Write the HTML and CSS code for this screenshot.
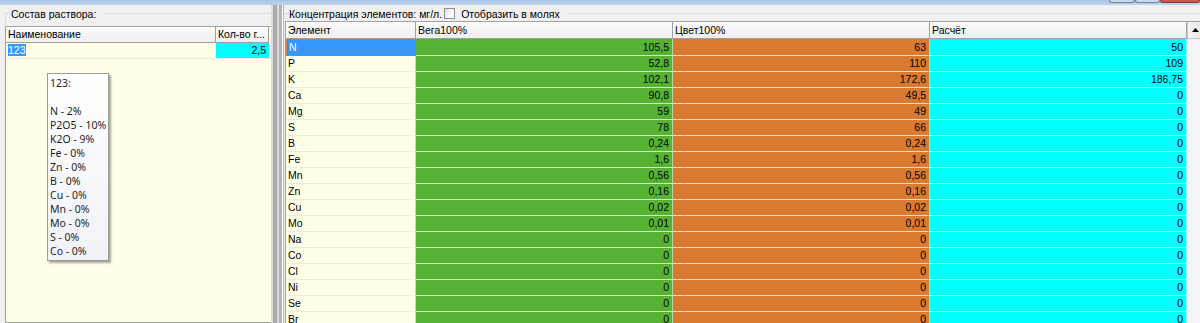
FILE: index.html
```html
<!DOCTYPE html>
<html lang="ru">
<head>
    <meta charset="UTF-8">
    <title>Состав раствора</title>
    <link rel="stylesheet" href="styles.css">
</head>
<body>
    <div class="titlebar">
        <span class="caption-btn min"></span>
        <span class="caption-btn max"></span>
        <span class="caption-btn close"></span>
    </div>

    <div class="workspace">
        <section class="left-panel">
            <div class="group-head">
                <span class="rule-start"></span>
                <span class="legend">Состав раствора:</span>
                <span class="rule"></span>
            </div>
            <div class="grid-box mix-grid">
                <table class="grid mix-table">
                    <colgroup><col class="c-name"><col class="c-qty"></colgroup>
                    <tr>
                        <th>Наименование</th>
                        <th>Кол-во г...</th>
                    </tr>
                    <tr>
                        <td class="name"><span class="sel-text">123</span></td>
                        <td class="qty">2,5</td>
                    </tr>
                </table>

                <div class="tooltip">
                    <div>123:</div>
                    <div>&nbsp;</div>
                    <div>N - 2%</div>
                    <div>P2O5 - 10%</div>
                    <div>K2O - 9%</div>
                    <div>Fe - 0%</div>
                    <div>Zn - 0%</div>
                    <div>B - 0%</div>
                    <div>Cu - 0%</div>
                    <div>Mn - 0%</div>
                    <div>Mo - 0%</div>
                    <div>S - 0%</div>
                    <div>Co - 0%</div>
                </div>
            </div>
        </section>

        <div class="splitter"></div>

        <section class="right-panel">
            <div class="group-head">
                <span class="rule-start"></span>
                <span class="legend">Концентрация элементов: мг/л.</span>
                <span class="checkbox"></span>
                <span class="legend">Отобразить в молях</span>
                <span class="rule"></span>
            </div>
            <div class="grid-box conc-grid">
                <table class="grid conc-table">
                    <colgroup>
                        <col class="c-el"><col class="c-val"><col class="c-val"><col class="c-val">
                    </colgroup>
                    <tr>
                        <th>Элемент</th>
                        <th>Вега100%</th>
                        <th>Цвет100%</th>
                        <th>Расчёт</th>
                    </tr>
                    <tr><td class="el current">N</td><td class="vega">105,5</td><td class="cvet">63</td><td class="calc">50</td></tr>
                    <tr><td class="el">P</td><td class="vega">52,8</td><td class="cvet">110</td><td class="calc">109</td></tr>
                    <tr><td class="el">K</td><td class="vega">102,1</td><td class="cvet">172,6</td><td class="calc">186,75</td></tr>
                    <tr><td class="el">Ca</td><td class="vega">90,8</td><td class="cvet">49,5</td><td class="calc">0</td></tr>
                    <tr><td class="el">Mg</td><td class="vega">59</td><td class="cvet">49</td><td class="calc">0</td></tr>
                    <tr><td class="el">S</td><td class="vega">78</td><td class="cvet">66</td><td class="calc">0</td></tr>
                    <tr><td class="el">B</td><td class="vega">0,24</td><td class="cvet">0,24</td><td class="calc">0</td></tr>
                    <tr><td class="el">Fe</td><td class="vega">1,6</td><td class="cvet">1,6</td><td class="calc">0</td></tr>
                    <tr><td class="el">Mn</td><td class="vega">0,56</td><td class="cvet">0,56</td><td class="calc">0</td></tr>
                    <tr><td class="el">Zn</td><td class="vega">0,16</td><td class="cvet">0,16</td><td class="calc">0</td></tr>
                    <tr><td class="el">Cu</td><td class="vega">0,02</td><td class="cvet">0,02</td><td class="calc">0</td></tr>
                    <tr><td class="el">Mo</td><td class="vega">0,01</td><td class="cvet">0,01</td><td class="calc">0</td></tr>
                    <tr><td class="el">Na</td><td class="vega">0</td><td class="cvet">0</td><td class="calc">0</td></tr>
                    <tr><td class="el">Co</td><td class="vega">0</td><td class="cvet">0</td><td class="calc">0</td></tr>
                    <tr><td class="el">Cl</td><td class="vega">0</td><td class="cvet">0</td><td class="calc">0</td></tr>
                    <tr><td class="el">Ni</td><td class="vega">0</td><td class="cvet">0</td><td class="calc">0</td></tr>
                    <tr><td class="el">Se</td><td class="vega">0</td><td class="cvet">0</td><td class="calc">0</td></tr>
                    <tr><td class="el">Br</td><td class="vega">0</td><td class="cvet">0</td><td class="calc">0</td></tr>
                </table>
                <div class="vscroll">
                    <div class="scroll-up">
                        <svg width="7" height="4" viewBox="0 0 7 4"><path d="M3.5 0 L7 4 L0 4 Z" fill="#000"/></svg>
                    </div>
                    <div class="scroll-track"></div>
                </div>
            </div>
        </section>
    </div>
</body>
</html>
```

FILE: styles.css
```css
body {
    margin: 0;
    height: 323px;
    overflow: hidden;
    background: #f0f0f0;
    font-family: "Liberation Sans", Arial, sans-serif;
    font-size: 10.5px;
    color: #000;
}

/* window caption strip */
.titlebar {
    height: 5px;
    background: linear-gradient(#a8c5e6, #bdd4ec);
    display: flex;
    justify-content: flex-end;
    align-items: flex-start;
}

.caption-btn {
    height: 3px;
    box-sizing: border-box;
    border: 1px solid #6f8399;
    border-top: none;
    border-radius: 0 0 3px 3px;
    background: #c9d9eb;
}

.caption-btn.min { width: 26px; }
.caption-btn.max { width: 25px; }

.caption-btn.close {
    width: 40px;
    background: #c8584e;
    border-color: #8d3a33;
}

.workspace {
    display: flex;
    height: 318px;
}

/* group box heading */
.group-head {
    display: flex;
    align-items: flex-start;
    flex: none;
}

.group-head .rule-start {
    width: 4px;
    margin-top: 8px;
    border-top: 1px solid #d5dfe5;
}

.group-head .rule {
    flex: 1;
    margin-top: 8px;
    margin-left: 8px;
    border-top: 1px solid #d5dfe5;
}

.legend {
    line-height: 16px;
    margin-top: 1px;
    padding: 0 1px;
    white-space: nowrap;
}

.left-panel {
    width: 271px;
    padding-left: 5px;
    box-sizing: border-box;
    display: flex;
    flex-direction: column;
}

.left-panel .group-head {
    height: 21px;
}

.left-panel .rule-start {
    height: 13px;
    border-left: 1px solid #d5dfe5;
}

.right-panel {
    flex: 1;
    min-width: 0;
    display: flex;
    flex-direction: column;
    border-left: 1px solid #b9b9b9;
}

.right-panel .group-head {
    height: 16px;
}

.checkbox {
    width: 11px;
    height: 11px;
    box-sizing: border-box;
    margin: 3px 5px 0 1px;
    border: 1px solid #8e8f8f;
    background: linear-gradient(135deg, #dcdcdc, #ffffff 70%);
}

.splitter {
    width: 12px;
    background: linear-gradient(90deg,
        #dcdcdc 0, #dcdcdc 2px,
        #aaaaaa 2px, #aaaaaa 6px,
        #dadada 6px, #dadada 8px,
        #b5b5b5 8px, #b5b5b5 11px,
        #ffffff 11px);
}

/* grids */
.grid-box {
    flex: 1;
    border: 1px solid #a0a0a0;
    border-right: none;
    background: #ffffe7;
}

.grid {
    border-collapse: separate;
    border-spacing: 0;
    table-layout: fixed;
}

.grid th,
.grid td {
    box-sizing: border-box;
    padding: 0 3px 0 2px;
    white-space: nowrap;
    overflow: hidden;
    font-weight: normal;
    text-align: left;
}

.grid th {
    background: linear-gradient(#fafafa, #efefef);
    border-right: 1px solid #a0a0a0;
    border-bottom: 1px solid #a0a0a0;
    box-shadow: inset 1px 1px #ffffff;
}

.mix-grid {
    position: relative;
}

.mix-table { width: 263px; }
.mix-table .c-name { width: 210px; }
.mix-table .c-qty { width: 53px; }

.mix-table th {
    height: 16px;
    line-height: 15px;
}

.mix-table td {
    height: 16px;
    line-height: 15px;
    border-bottom: 1px solid #ececdc;
}

.mix-table .sel-text {
    background: #3399ff;
    color: #fff;
}

.mix-table .qty {
    background: #00ffff;
    text-align: right;
}

.tooltip {
    position: absolute;
    left: 41px;
    top: 46px;
    width: 62px;
    box-sizing: border-box;
    padding: 2px 0 2px 2px;
    border: 1px solid #9a9a9a;
    background: linear-gradient(#ffffff, #f1f2f7);
    box-shadow: 2px 2px 2px rgba(0, 0, 0, 0.35);
    font-family: "Noto Sans", "Liberation Sans", sans-serif;
    font-size: 10.5px;
    line-height: 14px;
    color: #1e1e1e;
    white-space: nowrap;
}

.conc-grid {
    margin-left: 1px;
    display: flex;
    align-items: flex-start;
}

.conc-table {
    width: 901px;
    flex: none;
}

.conc-table .c-el { width: 130px; }
.conc-table .c-val { width: 257px; }

.conc-table th {
    height: 17px;
    line-height: 16px;
}

.conc-table td {
    height: 16px;
    line-height: 15px;
    border-right: 1px solid rgba(255, 255, 255, 0.55);
    border-bottom: 1px solid rgba(255, 255, 255, 0.7);
    text-align: right;
}

.conc-table td.el {
    text-align: left;
    background: #ffffe7;
    border-right-color: #cfcfc4;
    border-bottom-color: #ececdc;
}

.conc-table td.current {
    background: #3399ff;
    color: #fff;
    border: 1px solid #c8773a;
}

.conc-table .vega { background: #57b233; }
.conc-table .cvet { background: #d87a30; }
.conc-table .calc { background: #00ffff; }

.vscroll {
    width: 17px;
    flex: none;
    align-self: stretch;
    display: flex;
    flex-direction: column;
}

.scroll-up {
    height: 17px;
    box-sizing: border-box;
    border-left: 1px solid #c8c8c8;
    border-bottom: 1px solid #c8c8c8;
    background: linear-gradient(90deg, #f3f3f3, #e6e6e6);
    display: flex;
    align-items: center;
    justify-content: center;
    padding-right: 2px;
}

.scroll-track {
    flex: 1;
    background: #f4f4f4;
}
```
